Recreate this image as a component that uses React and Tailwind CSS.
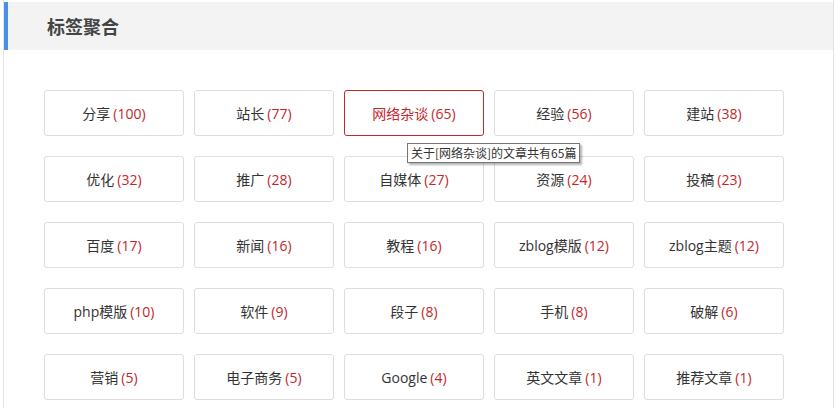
import React from "react";

const tags = [
  ["分享", 100], ["站长", 77], ["网络杂谈", 65], ["经验", 56], ["建站", 38],
  ["优化", 32], ["推广", 28], ["自媒体", 27], ["资源", 24], ["投稿", 23],
  ["百度", 17], ["新闻", 16], ["教程", 16], ["zblog模版", 12], ["zblog主题", 12],
  ["php模版", 10], ["软件", 9], ["段子", 8], ["手机", 8], ["破解", 6],
  ["营销", 5], ["电子商务", 5], ["Google", 4], ["英文文章", 1], ["推荐文章", 1],
];

export default function App() {
  return (
    <div
      className="w-[836px] h-[408px] overflow-hidden bg-white pl-[3px]"
      style={{ fontFamily: '"Open Sans", "Noto Sans CJK SC", sans-serif' }}
    >
      <div className="w-[831px] h-[420px] border-x border-[#e3e3e3] pt-[2px]">
        <div className="h-[48px] bg-[#f3f3f3] border-l-4 border-[#4a90e8] flex items-center pl-[39px]">
          <h2
            className="text-[18px] font-bold text-[#444] leading-none"
            style={{ fontFamily: '"Noto Sans CJK SC", sans-serif' }}
          >
            标签聚合
          </h2>
        </div>
        <div className="relative pl-[40px] pt-[40px] grid grid-cols-[repeat(5,140px)] gap-x-[10px] gap-y-[20px]">
          {tags.map(([name, n], i) => {
            const active = i === 2;
            return (
              <div key={name} className="relative">
                <div
                  className={
                    "h-[46px] rounded-[3px] border flex items-center justify-center text-[14px] " +
                    (active ? "border-[#c4262b] text-[#c4262b]" : "border-[#dddddd] text-[#333]")
                  }
                >
                  <span>{name}</span>
                  <span className="ml-[3px] text-[#c4262b]">({n})</span>
                </div>
                {active && (
                  <div className="absolute left-[63px] top-[53px] z-10 whitespace-nowrap bg-white border border-[#767676] px-[3px] h-[20px] flex items-center text-[12px] text-[#333] shadow-[2px_2px_2px_rgba(0,0,0,0.3)]"
                    style={{ fontFamily: '"Noto Sans CJK SC", sans-serif' }}
                  >
                    关于[网络杂谈]的文章共有65篇
                  </div>
                )}
              </div>
            );
          })}
        </div>
      </div>
    </div>
  );
}
